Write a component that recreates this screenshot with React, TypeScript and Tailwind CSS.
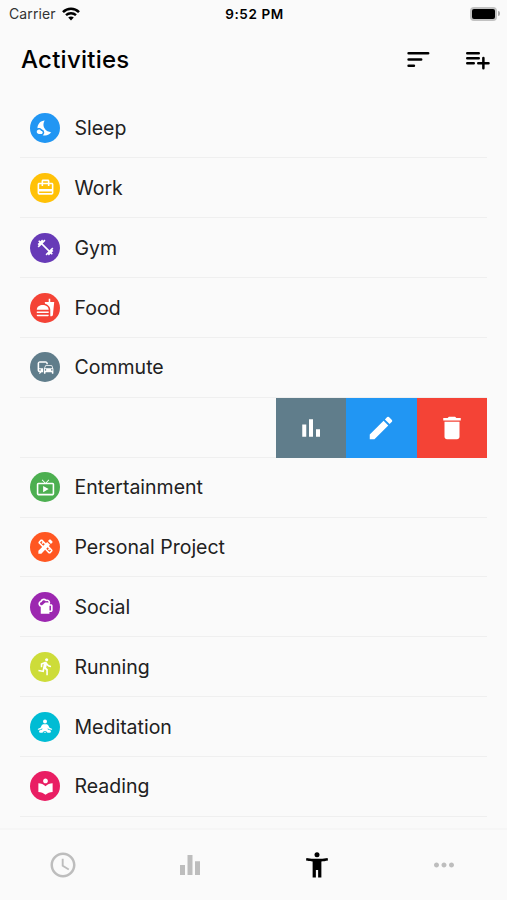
import { IconType } from "react-icons";
import {
  MdAccessTime,
  MdCardTravel,
  MdCommute,
  MdDelete,
  MdDesignServices,
  MdDirectionsRun,
  MdEdit,
  MdEqualizer,
  MdFastfood,
  MdFitnessCenter,
  MdLiveTv,
  MdLocalLibrary,
  MdMoreHoriz,
  MdNightsStay,
  MdSportsBar,
} from "react-icons/md";
import clsx from "clsx";

interface IconProps {
  size?: number;
  className?: string;
}

const BarsIcon = ({ size = 24, className }: IconProps) => (
  <svg
    width={size}
    height={size}
    viewBox="0 0 24 24"
    fill="currentColor"
    className={className}
  >
    <path d="M5 9.2h3.2V19H5zM10.4 5h3.2v14h-3.2zm5.6 8h3.2v6H16z" />
  </svg>
);

const SortIcon = ({ size = 24, className }: IconProps) => (
  <svg
    width={size}
    height={size}
    viewBox="0 0 24 24"
    fill="none"
    stroke="currentColor"
    strokeWidth="2.1"
    strokeLinecap="round"
    className={className}
  >
    <path d="M4.500 6.600h15.600M4.500 11.600h10M4.500 16.600h4.200" />
  </svg>
);

const PlaylistAddIcon = ({ size = 24, className }: IconProps) => (
  <svg
    width={size}
    height={size}
    viewBox="0 0 24 24"
    fill="none"
    stroke="currentColor"
    strokeWidth="2"
    strokeLinecap="round"
    className={className}
  >
    <path d="M3.400 6.600h9.200M3.400 10.500h9.200M3.400 14.500h5.200M12.200 14.500h8.200M16.300 10.400v8.200" />
  </svg>
);

const PersonIcon = ({ size = 24, className }: IconProps) => (
  <svg
    width={size}
    height={size}
    viewBox="0 0 24 24"
    fill="currentColor"
    className={className}
  >
    <circle cx="12" cy="3.700" r="2" />
    <path d="M20.500 6.300C17.800 6.800 14.800 7 12 7S6.200 6.800 3.500 6.300l-.3 2c1.800.4 3.900.7 5.300.8V22h2.600v-6h1.800v6h2.600V9.100c1.400-.1 3.500-.4 5.300-.8z" />
  </svg>
);

const MeditationIcon = ({ size = 24, className }: IconProps) => (
  <svg
    width={size}
    height={size}
    viewBox="0 0 24 24"
    fill="currentColor"
    className={className}
  >
    <circle cx="12" cy="3.800" r="3" />
    <path d="M10 8h4c1.500 0 2.500.9 3.200 2.200l1.600 2.800 3.500 1.500c.8.400.5 1.700-.5 1.600l-4-.8-1.600-1.800v2.200l3.400 1.300c2 .8 1.700 3.800-.6 3.800h-3.500c.2-1.600-1.400-2.600-3.500-2.600s-3.700 1-3.500 2.600H5c-2.300 0-2.600-3-.6-3.800l3.400-1.300v-2.200l-1.600 1.800-4 .8c-1 .1-1.300-1.200-.5-1.600l3.500-1.500 1.600-2.800C7.500 8.900 8.500 8 10 8z" />
    <path d="M9.900 21c.2-.8 1-1.200 2.100-1.200s1.900.4 2.100 1.200z" />
  </svg>
);

interface Activity {
  name: string;
  icon: IconType | typeof MeditationIcon;
  color: string;
  iconSize?: number;
}

const activities: Activity[] = [
  { name: "Sleep", icon: MdNightsStay, color: "bg-[#2196f3]", iconSize: 18 },
  { name: "Work", icon: MdCardTravel, color: "bg-[#ffc107]" },
  { name: "Gym", icon: MdFitnessCenter, color: "bg-[#673ab7]" },
  { name: "Food", icon: MdFastfood, color: "bg-[#f44336]" },
  { name: "Commute", icon: MdCommute, color: "bg-[#607d8b]" },
];

const moreActivities: Activity[] = [
  { name: "Entertainment", icon: MdLiveTv, color: "bg-[#4caf50]" },
  { name: "Personal Project", icon: MdDesignServices, color: "bg-[#ff5722]" },
  { name: "Social", icon: MdSportsBar, color: "bg-[#9c27b0]" },
  { name: "Running", icon: MdDirectionsRun, color: "bg-[#cddc39]" },
  {
    name: "Meditation",
    icon: MeditationIcon,
    color: "bg-[#00bcd4]",
    iconSize: 16,
  },
  { name: "Reading", icon: MdLocalLibrary, color: "bg-[#e91e63]" },
];

const tabs = [
  { label: "Timer", icon: MdAccessTime },
  { label: "Stats", icon: MdEqualizer },
  { label: "Activities", icon: PersonIcon, active: true },
  { label: "More", icon: MdMoreHoriz },
];

const StatusBar = () => (
  <div className="grid h-7 grid-cols-3 items-center pl-[9px] pr-[7px] text-[13.5px] text-black">
    <div className="flex items-center gap-[6px] pb-px">
      <span className="text-[14px] tracking-[0.1px] text-[#333]">Carrier</span>
      <svg width="18" height="14" viewBox="0 0 18 14" fill="none" stroke="black">
        <path d="M1 5.100C5.500.7 12.500.7 17 5.100" strokeWidth="2.600" />
        <path d="M4 8.200c2.800-2.700 7.200-2.700 10 0" strokeWidth="2.400" />
        <path d="M6.200 10.600c1.600-1.500 4-1.500 5.600 0L9 13.500z" fill="black" stroke="none" />
      </svg>
    </div>
    <div className="text-center font-semibold tracking-[0.6px]">9:52 PM</div>
    <div className="flex items-center justify-end pb-px">
      <div className="h-[14px] w-[27px] rounded-[4px] border-2 border-[#c2c2c2] bg-[#c2c2c2]">
        <div className="h-full rounded-[2px] bg-black" />
      </div>
      <div className="ml-px h-[5px] w-[2px] rounded-r-full bg-[#aaa]" />
    </div>
  </div>
);

const ActivityRow = ({ name, icon: Icon, color, iconSize = 19 }: Activity) => (
  <li className="flex h-[59.86px] items-center border-b border-[#efefef] pl-[10px]">
    <div
      className={clsx(
        "flex size-[30px] items-center justify-center rounded-full text-white",
        color
      )}
    >
      <Icon size={iconSize} />
    </div>
    <span className="ml-[14.5px] text-[19.5px] leading-7 text-[#212121]">
      {name}
    </span>
  </li>
);

const SwipeActions = () => (
  <li className="flex h-[59.86px] justify-end border-b border-[#efefef]">
    <div className="-mb-px grid w-[211px] grid-cols-3 text-white">
      <button className="flex items-center justify-center bg-[#607d8b]">
        <BarsIcon size={30} />
      </button>
      <button className="flex items-center justify-center bg-[#2196f3]">
        <MdEdit size={30} />
      </button>
      <button className="flex items-center justify-center bg-[#f44336]">
        <MdDelete size={30} />
      </button>
    </div>
  </li>
);

const App = () => {
  return (
    <div className="flex h-[900px] w-[507px] flex-col overflow-hidden bg-[#fafafa] font-['Inter','Liberation_Sans',sans-serif]">
      <StatusBar />
      <header className="flex h-[70.5px] items-start justify-between pl-[21px] pr-[14px]">
        <h1 className="mt-[14px] text-[24px] font-medium leading-9 tracking-[0.25px] text-black">
          Activities
        </h1>
        <div className="mt-[17px] flex gap-[30px] text-black">
          <SortIcon size={30} />
          <PlaylistAddIcon size={30} />
        </div>
      </header>
      <ul className="ml-5 mr-[20px] flex-1">
        {activities.map((activity) => (
          <ActivityRow key={activity.name} {...activity} />
        ))}
        <SwipeActions />
        {moreActivities.map((activity) => (
          <ActivityRow key={activity.name} {...activity} />
        ))}
      </ul>
      <nav className="grid h-[72px] grid-cols-4 border-t-2 border-[#f6f6f6] pb-px">
        {tabs.map(({ label, icon: Icon, active }) => (
          <button
            key={label}
            aria-label={label}
            className={clsx(
              "flex items-center justify-center",
              active ? "text-black" : "text-[#bdbdbd]"
            )}
          >
            <Icon size={30} />
          </button>
        ))}
      </nav>
    </div>
  );
};

export default App;
